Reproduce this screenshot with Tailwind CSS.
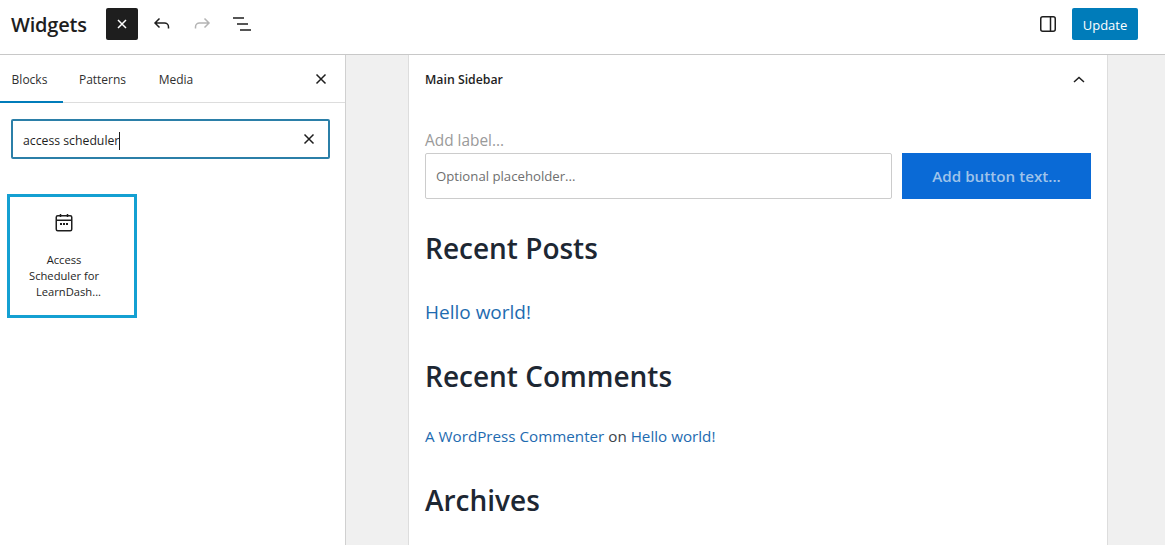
<!DOCTYPE html>
<html lang="en">
<head>
    <meta charset="UTF-8">
    <title>Widgets</title>
    <script src="https://cdn.jsdelivr.net/npm/@tailwindcss/browser@4"></script>
</head>
<body class="bg-white font-['Open_Sans',sans-serif] text-[#1e1e1e] overflow-hidden">
    <div class="w-[1165px] h-[545px] flex flex-col overflow-hidden">
        <!-- Top bar -->
        <header class="h-[55px] shrink-0 border-b border-[#c8c8c8] flex items-center pl-[11px] pr-[27px] pb-[6px]">
            <h1 class="text-[20px] font-semibold w-[95px] tracking-[-0.2px] mt-[1px]">Widgets</h1>
            <button class="w-8 h-8 rounded-[2px] bg-[#1e1e1e] flex items-center justify-center">
                <svg width="24" height="24" viewBox="0 0 24 24" fill="none" stroke="white" stroke-width="1.5"><path d="M8 8l8 8M16 8l-8 8"/></svg>
            </button>
            <div class="flex items-center gap-4 ml-[12px]">
                <svg width="24" height="24" viewBox="0 0 24 24" fill="none" stroke="#1e1e1e" stroke-width="1.5"><path d="M9.500 6.500L5 11l4.500 4.500M5 11h9.500c2 0 4 1.500 4 4v1.500"/></svg>
                <svg width="24" height="24" viewBox="0 0 24 24" fill="none" stroke="#b4b4b4" stroke-width="1.5"><path d="M14.500 6.500L19 11l-4.500 4.500M19 11H9.500c-2 0-4 1.500-4 4v1.500"/></svg>
                <svg width="24" height="24" viewBox="0 0 24 24" fill="none" stroke="#1e1e1e" stroke-width="1.5"><path d="M3 6h11M7 12h11M10 18h11"/></svg>
            </div>
            <div class="ml-auto flex items-center gap-[12px]">
                <svg width="24" height="24" viewBox="0 0 24 24" fill="none" stroke="#1e1e1e" stroke-width="1.5"><rect x="4.750" y="4.750" width="14.500" height="14.500" rx="2"/><path d="M14.500 5v14"/></svg>
                <button class="w-[66px] h-8 pt-[3px] rounded-[2px] bg-[#007cba] text-white text-[13px]">Update</button>
            </div>
        </header>

        <div class="flex flex-1 min-h-0">
            <!-- Inserter -->
            <aside class="w-[346px] shrink-0 border-r border-[#d0d0d0] bg-white">
                <div class="h-[48px] border-b border-[#dddddd] flex items-center text-[12px] text-[#2f2f2f] relative">
                    <div class="w-[59px] h-full flex items-center justify-center relative">
                        <span class="mt-[2px]">Blocks</span>
                        <div class="absolute left-0 right-[-4px] bottom-[-1px] h-[2px] bg-[#007cba]"></div>
                    </div>
                    <div class="w-[87px] text-center mt-[2px]">Patterns</div>
                    <div class="w-[60px] text-center mt-[2px]">Media</div>
                    <svg class="ml-auto mr-[12px]" width="24" height="24" viewBox="0 0 24 24" fill="none" stroke="#1e1e1e" stroke-width="1.500"><path d="M7.500 7.500l9 9M16.500 7.500l-9 9"/></svg>
                </div>
                <div class="px-[11px] pt-4">
                    <div class="h-[40px] w-[319px] rounded-[2px] border-2 border-[#2b7fa8] flex items-center pl-[10px] pr-[7px] text-[12.25px]">
                        <span class="border-r border-[#1e1e1e] leading-[18px] mt-[3px]">access scheduler</span>
                        <svg class="ml-auto" width="24" height="24" viewBox="0 0 24 24" fill="none" stroke="#1e1e1e" stroke-width="1.500"><path d="M7.500 7.500l9 9M16.500 7.500l-9 9"/></svg>
                    </div>
                </div>
                <div class="mt-[35px] ml-[7px] w-[130px] h-[124px] border-[3px] border-[#14a0d2] flex flex-col items-center pr-[16px]">
                    <svg class="mt-[14px]" width="24" height="24" viewBox="0 0 24 24" fill="none" stroke="#1e1e1e" stroke-width="1.500"><rect x="4.250" y="4.750" width="15.500" height="15" rx="1.500"/><path d="M4.500 9.250h15M8.500 3v3M15.500 3v3"/><path d="M8 13h2M11 13h2M14 13h2" stroke-width="1.800"/></svg>
                    <p class="mt-[17px] w-[100px] text-center text-[11.2px] leading-[16px]">Access<br>Scheduler for<br><span class="pl-[9px]">LearnDash...</span></p>
                </div>
            </aside>

            <!-- Canvas -->
            <main class="flex-1 bg-[#f0f0f0] pl-[62px] pr-[57px] overflow-hidden">
                <div class="bg-white border-x border-[#dddddd] h-[600px] pl-[16px] pr-[16px]">
                    <div class="h-[50px] flex items-center justify-between">
                        <span class="text-[12.3px] font-semibold">Main Sidebar</span>
                        <svg width="24" height="24" viewBox="0 0 24 24" fill="none" stroke="#1e1e1e" stroke-width="1.500"><path d="M7 14l5-4.500 5 4.500"/></svg>
                    </div>
                    <div class="mt-[24px] text-[15.4px] leading-[24px] text-[#9a9a9a]">Add label...</div>
                    <div class="flex gap-[10px]">
                        <div class="flex-1 h-[46px] border border-[#cccccc] rounded-[2px] flex items-center pl-[10px] text-[13.2px] text-[#6f6f6f]"><span class="mt-[2px]">Optional placeholder...</span></div>
                        <button class="w-[189px] h-[46px] bg-[#0a6ad6] text-[#9fc3ea] text-[15.2px] font-semibold">Add button text...</button>
                    </div>
                    <h2 class="mt-[29px] text-[28px] leading-[40px] font-semibold text-[#1d2733]">Recent Posts</h2>
                    <a class="block mt-[29px] text-[19px] leading-[30px] text-[#1e6bb0]">Hello world!</a>
                    <h2 class="mt-[29px] text-[28px] leading-[40px] font-semibold text-[#1d2733]">Recent Comments</h2>
                    <p class="mt-[28px] text-[15.2px] leading-[24px] text-[#3c434a]"><a class="text-[#1e6bb0]">A WordPress Commenter</a> on <a class="text-[#1e6bb0]">Hello world!</a></p>
                    <h2 class="mt-[32px] text-[28px] leading-[40px] font-semibold text-[#1d2733]">Archives</h2>
                </div>
            </main>
        </div>
    </div>
</body>
</html>
